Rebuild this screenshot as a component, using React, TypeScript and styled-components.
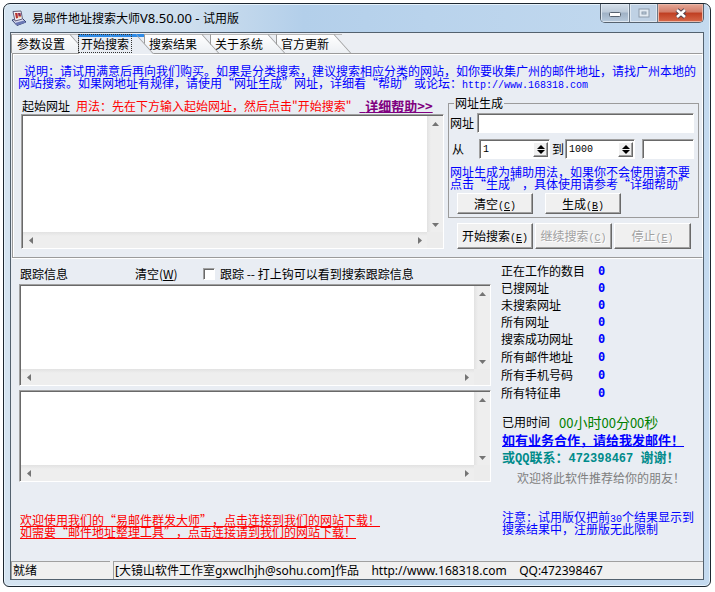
import React from "react";
import styled, { createGlobalStyle, css } from "styled-components";

const cjk = `"Noto Sans CJK SC", sans-serif`;
const ui = `"Noto Sans", "Noto Sans CJK SC", sans-serif`;
const mono = `"Liberation Mono", monospace`;

const Global = createGlobalStyle`
  *, *::before, *::after { box-sizing: border-box; }
  body { margin: 0; background: #fff; }
  #root { padding: 3px 4px 4px 3px; }
  button, input, textarea { font: inherit; color: inherit; margin: 0; padding: 0; border-radius: 0; }
  p, ul, dl, dd { margin: 0; padding: 0; }
`;

const Window = styled.div`
  border: 1px solid #1d2730;
  border-radius: 7px 7px 6px 6px;
  padding: 0 6px 6px;
  background: linear-gradient(90deg, #d5e4f1 0, #cfdfee 180px, #b3cfea 300px, #b9d3ec 60%, #c4daef 100%);
  box-shadow: inset 0 0 0 1px #e6f2fb;
  font: 12px/12px ${cjk};
  color: #000;
  text-spacing-trim: space-all;
`;

const TitleBar = styled.header`
  display: flex;
  align-items: flex-start;
  height: 28px;
  padding-left: 1px;
`;

const Title = styled.h1`
  flex: 1;
  margin: 5px 0 0 5px;
  font: 12px/18px ${ui};
  white-space: pre;
  span { font-size: 13px; }
`;

const Controls = styled.div`
  display: flex;
  height: 19px;
  border: 1px solid #56626f;
  border-top: 0;
  border-radius: 0 0 5px 5px;
  overflow: hidden;
`;

const Control = styled.button<{ $kind?: "close" | "dim" }>`
  width: 28px;
  border: 0;
  border-left: 1px solid #6d7a88;
  display: flex;
  align-items: center;
  justify-content: center;
  background: linear-gradient(#d6e0ea, #bccad9 45%, #9fb1c5 50%, #b8cadc);
  box-shadow: inset 0 0 0 1px #dfe8f1;
  &:first-child { border-left: 0; }
  ${(p) => p.$kind === "dim" && css`background: #bfd1e4;`}
  ${(p) =>
    p.$kind === "close" &&
    css`
      width: 46px;
      background: linear-gradient(#e6a897, #d27c68 45%, #bf3e22 50%, #d7694a);
      box-shadow: inset 0 0 0 1px #eab8a9;
    `}
`;

const Client = styled.main`
  border: 1px solid #53616e;
  background: #e9edf3;
`;

const Tabs = styled.nav`
  display: flex;
  height: 20px;
  padding-top: 1px;
  background: #ebeef3;
`;

const Tab = styled.button<{ $active?: boolean; $level: number }>`
  position: relative;
  z-index: ${(p) => p.$level};
  width: 66px;
  height: 19px;
  border: 0;
  border-left: 1px solid #9b9b9b;
  border-top: 1px solid #b8b8b8;
  padding-left: 4px;
  text-align: left;
  white-space: nowrap;
  background: linear-gradient(#fff, #eceff3) no-repeat 0 0 / 50px 100%;
  clip-path: inset(0 -20px 0 0);
  span { position: relative; z-index: 1; }
  &::after {
    content: "";
    position: absolute;
    left: 30px;
    right: 8px;
    top: -1px;
    bottom: 0;
    border-top: 1px solid #b8b8b8;
    border-right: 1px solid #9b9b9b;
    background: linear-gradient(#fff, #eceff3);
    transform: skewX(42deg);
    transform-origin: top right;
  }
  &:first-child { width: 67px; padding-left: 5px; }
  ${(p) =>
    p.$active &&
    css`
      height: 20px;
      padding: 0 0 4px;
      border-top: 3px solid #2f8be6;
      background: #e9edf3;
      &::after { top: -3px; border-top: 3px solid #2f8be6; background: #e9edf3; }
      span { outline: 1px dotted #333; padding: 0 2px; }
    `}
`;

const SearchPanel = styled.section`
  margin-left: 1px;
  border: 1px solid #9b9b9b;
  border-right-color: #fff;
  box-shadow: inset 1px 1px 0 #fff, 0 1px 0 #fff;
  padding: 11px 3px 8px 8px;
`;

const Intro = styled.p`
  color: #00f;
  margin-left: -3px;
  margin-bottom: 8px;
  white-space: pre;
`;

const Half = styled.span`
  font-family: ${mono};
  font-size: 10px;
  line-height: 0;
`;

const Split = styled.div<{ $gap: number; $side: number }>`
  display: grid;
  grid-template-columns: minmax(0, 1fr) ${(p) => p.$side}px;
  column-gap: ${(p) => p.$gap}px;
  align-items: start;
`;

const StartRow = styled.div`
  display: flex;
  height: 12px;
  margin: 3px 0 2px 1px;
  white-space: pre;
`;

const Usage = styled.span`
  color: #f00;
  margin: 0 8px 0 6px;
`;

const HelpLink = styled.a`
  color: #800080;
  font-size: 13px;
  font-weight: 700;
  text-decoration: underline;
`;

const sunken = css`
  border: 1px solid;
  border-color: #a0a0a0 #fff #fff #a0a0a0;
  box-shadow: inset 1px 1px 0 #696969;
`;

const ScrollFrame = styled.div<{ $height: number; $top?: number }>`
  ${sunken}
  display: grid;
  grid-template: minmax(0, 1fr) 16px / minmax(0, 1fr) 16px;
  height: ${(p) => p.$height}px;
  margin-top: ${(p) => p.$top ?? 0}px;
  padding: 1px 0 0 1px;
  background: #ececec;
`;

const Area = styled.textarea`
  display: block;
  width: 100%;
  height: 100%;
  border: 0;
  outline: 0;
  resize: none;
  background: #fff;
  overflow: hidden;
`;

const Bar = styled.div<{ $vertical?: boolean }>`
  display: flex;
  flex-direction: ${(p) => (p.$vertical ? "column" : "row")};
  justify-content: space-between;
  background: linear-gradient(${(p) => (p.$vertical ? "90deg" : "180deg")}, #e2e2e2, #eee 4px);
`;

const ArrowButton = styled.button`
  width: 16px;
  height: 16px;
  border: 0;
  background: none;
  display: flex;
  align-items: center;
  justify-content: center;
`;

const arrowPaths = {
  up: "M1 6 L4.500 2 L8 6Z",
  down: "M1 3 L4.500 7 L8 3Z",
  left: "M6 1 L2 4.500 L6 8Z",
  right: "M3 1 L7 4.500 L3 8Z",
};

function Arrow({ dir }: { dir: keyof typeof arrowPaths }) {
  return (
    <ArrowButton type="button" aria-label={dir}>
      <svg width="9" height="9" viewBox="0 0 9 9">
        <path d={arrowPaths[dir]} fill="#747474" />
      </svg>
    </ArrowButton>
  );
}

function ScrollBox({ label, height, top }: { label: string; height: number; top?: number }) {
  return (
    <ScrollFrame $height={height} $top={top}>
      <Area aria-label={label} />
      <Bar $vertical>
        <Arrow dir="up" />
        <Arrow dir="down" />
      </Bar>
      <Bar>
        <Arrow dir="left" />
        <Arrow dir="right" />
      </Bar>
    </ScrollFrame>
  );
}

const Group = styled.fieldset`
  margin: 0;
  min-width: 0;
  border: 1px solid #9b9b9b;
  padding: 4px 4px 3px 1px;
`;

const Legend = styled.legend`
  margin-left: 4px;
  padding: 0 1px;
`;

const Field = styled.input`
  ${sunken}
  flex: 1;
  width: 100%;
  min-width: 0;
  height: 20px;
  padding: 0 4px;
  outline: 0;
  background: #fff;
`;

const UrlRow = styled.div`
  display: flex;
  align-items: center;
  gap: 3px;
  margin-bottom: 6px;
`;

const RangeRow = styled.div`
  display: grid;
  grid-template-columns: 29px 71px 15px 70px minmax(0, 1fr);
  align-items: center;
  label { padding-left: 2px; }
`;

const Suffix = styled.div`
  padding-left: 7px;
  display: flex;
`;

const SpinFrame = styled.div`
  ${sunken}
  display: flex;
  height: 20px;
  padding: 2px 1px 1px 3px;
  background: #fff;
  input {
    flex: 1;
    min-width: 0;
    border: 0;
    outline: 0;
    background: none;
    font: 10px/12px ${mono};
  }
`;

const raised = css`
  border: 1px solid;
  border-color: #fff #696969 #696969 #fff;
  box-shadow: inset -1px -1px 0 #a0a0a0;
  background: #f0f0f0;
`;

const SpinButtons = styled.div`
  ${raised}
  display: flex;
  flex-direction: column;
  width: 15px;
  button {
    flex: 1;
    border: 0;
    background: none;
    display: flex;
    align-items: center;
    justify-content: center;
  }
`;

function Spin({ id, value }: { id: string; value: string }) {
  return (
    <SpinFrame>
      <input id={id} defaultValue={value} />
      <SpinButtons>
        <button type="button" aria-label="增加">
          <svg width="8" height="5" viewBox="0 0 8 5"><path d="M0 5 L4 1 L8 5Z" /></svg>
        </button>
        <button type="button" aria-label="减少">
          <svg width="8" height="5" viewBox="0 0 8 5"><path d="M0 0 L4 4 L8 0Z" /></svg>
        </button>
      </SpinButtons>
    </SpinFrame>
  );
}

const Hint = styled.p`
  color: #00f;
  margin: 7px 0 3px;
  white-space: pre;
`;

const Push = styled.button<{ $tall?: boolean }>`
  ${raised}
  height: ${(p) => (p.$tall ? 26 : 21)}px;
  width: 76px;
  white-space: nowrap;
  &:disabled {
    color: #a0a0a0;
    text-shadow: 1px 1px 0 #fff;
  }
`;

const GroupActions = styled.div`
  display: flex;
  gap: 12px;
  padding-left: 7px;
`;

const RunActions = styled.div`
  display: grid;
  grid-template-columns: 76px 77px 77px;
  gap: 2px;
  padding: 5px 0 0 9px;
  button { width: 100%; }
`;

function Caption({ text, hotkey }: { text: string; hotkey: string }) {
  return (
    <>
      {text}
      <Half>(<u>{hotkey}</u>)</Half>
    </>
  );
}

const TracePanel = styled.section`
  padding: 4px 2px 23px 8px;
`;

const TraceRow = styled.div`
  display: grid;
  grid-template-columns: 115px 68px auto;
  align-items: center;
  height: 12px;
  margin: 6px 0 4px 1px;
  label {
    display: flex;
    align-items: center;
    gap: 5px;
    white-space: pre;
  }
`;

const PlainButton = styled.button`
  border: 0;
  background: none;
  text-align: left;
`;

const Check = styled.input`
  ${sunken}
  appearance: none;
  width: 12px;
  height: 12px;
  background: #fff;
`;

const Promo = styled.a`
  display: block;
  width: max-content;
  color: #f00;
  text-decoration: underline;
  text-underline-offset: 1px;
`;

const Promos = styled.div`
  margin: 32px 0 0 1px;
`;

const Stats = styled.dl`
  display: grid;
  grid-template-columns: 97px 1fr;
  grid-template-rows: repeat(4, 17px) repeat(4, 18px);
  align-items: center;
  dd {
    color: #00f;
    font: 700 12px/12px "DejaVu Sans Mono", monospace;
  }
`;

const Elapsed = styled.p`
  display: flex;
  gap: 9px;
  margin: 12px 0 1px 1px;
  line-height: 16px;
`;

const Clock = styled.output`
  color: #008000;
  font-size: 14px;
  span { font-size: 13px; }
`;

const MailLink = styled.a`
  display: block;
  width: max-content;
  margin-left: 1px;
  color: #00f;
  font-size: 13px;
  font-weight: 700;
  line-height: 16px;
`;

const Contact = styled.p`
  margin: 1px 0 6px 1px;
  color: #008b8b;
  font-size: 13px;
  font-weight: 700;
  line-height: 16px;
  white-space: pre;
  span { font: 700 12px/12px ${mono}; }
`;

const Recommend = styled.p`
  margin-left: 16px;
  color: #808080;
  line-height: 14px;
`;

const Notice = styled.p`
  margin: 26px 0 0 1px;
  color: #00f;
`;

const StatusBar = styled.footer`
  display: flex;
  gap: 3px;
  background: #f0f0f0;
  font: 12px/18px ${ui};
`;

const StatusCell = styled.div<{ $width?: number }>`
  flex: ${(p) => (p.$width ? `0 0 ${p.$width}px` : "1")};
  height: 18px;
  padding-left: 1px;
  border-top: 1px solid #a0a0a0;
  border-left: 1px solid #a0a0a0;
  white-space: pre;
`;

const tabs = ["参数设置", "开始搜索", "搜索结果", "关于系统", "官方更新"];
const stats = [
  "正在工作的数目",
  "已搜网址",
  "未搜索网址",
  "所有网址",
  "搜索成功网址",
  "所有邮件地址",
  "所有手机号码",
  "所有特征串",
];

function AppIcon() {
  return (
    <svg width="16" height="16" viewBox="0 0 16 16">
      <path d="M1 10 L11 8 L15 12 L6 15.500Z" fill="#d9dcf0" stroke="#34406e" />
      <path d="M4 13 L13 10.500 L15 12.500 L6 15.500Z" fill="#6a78b4" />
      <path d="M2 1.500 L10 1 L11.500 9 L4 11Z" fill="#f4f0f4" stroke="#62607c" />
      <path d="M4 3 L6.500 3 L7 8 L5 8.500Z" fill="#b8322c" />
      <path d="M7 3 L9.500 3 L10 6 L7.500 6.500Z" fill="#8c2c50" />
      <path d="M7.500 7 L10 6.500" stroke="#e08a3c" />
    </svg>
  );
}

const IconSlot = styled.span`
  margin-top: 6px;
  width: 16px;
  height: 16px;
`;

export default function App() {
  return (
    <>
      <Global />
      <Window lang="zh-CN">
        <TitleBar>
          <IconSlot><AppIcon /></IconSlot>
          <Title>易邮件地址搜索大师<span>V8.50.00 - </span>试用版</Title>
          <Controls>
            <Control type="button" aria-label="最小化">
              <svg width="14" height="8" viewBox="0 0 14 8">
                <rect x="1.500" y="3.500" width="11" height="4" rx="1" fill="#fff" stroke="#566270" />
              </svg>
            </Control>
            <Control type="button" aria-label="最大化" $kind="dim" disabled>
              <svg width="12" height="10" viewBox="0 0 12 10">
                <rect x="1" y="1" width="10" height="8" fill="#e3ebf3" stroke="#8e9cab" />
                <rect x="4" y="4" width="4" height="2" fill="#bfd1e4" stroke="#8e9cab" />
              </svg>
            </Control>
            <Control type="button" aria-label="关闭" $kind="close">
              <svg width="14" height="11" viewBox="0 0 14 11">
                <path d="M3 2 L11 9 M11 2 L3 9" stroke="#55404a" strokeWidth="4.500" />
                <path d="M3 2 L11 9 M11 2 L3 9" stroke="#fff" strokeWidth="2.600" />
              </svg>
            </Control>
          </Controls>
        </TitleBar>
        <Client>
          <Tabs>
            {tabs.map((t, i) => (
              <Tab key={t} type="button" $active={i === 1} $level={i === 1 ? 9 : tabs.length - i}>
                <span>{t}</span>
              </Tab>
            ))}
          </Tabs>
          <SearchPanel>
            <Intro>
              <Half> </Half>说明：请试用满意后再向我们购买。如果是分类搜索，建议搜索相应分类的网站，如你要收集广州的邮件地址，请找广州本地的
              <br />
              网站搜索。如果网地址有规律，请使用“网址生成”网址，详细看“帮助”或论坛：<Half>http://www.168318.com</Half>
            </Intro>
            <Split $gap={4} $side={251}>
              <div>
                <StartRow>
                  <span>起始网址</span>
                  <Usage>用法：先在下方输入起始网址，然后点击"开始搜索"</Usage>
                  <HelpLink href="#help">{"\u00a0\u00a0"}详细帮助&gt;&gt;</HelpLink>
                </StartRow>
                <ScrollBox label="起始网址" height={135} />
              </div>
              <div>
                <Group>
                  <Legend>网址生成</Legend>
                  <UrlRow>
                    <label htmlFor="url">网址</label>
                    <Field id="url" />
                  </UrlRow>
                  <RangeRow>
                    <label htmlFor="from">从</label>
                    <Spin id="from" value="1" />
                    <label htmlFor="to">到</label>
                    <Spin id="to" value="1000" />
                    <Suffix><Field aria-label="后缀" /></Suffix>
                  </RangeRow>
                  <Hint>
                    网址生成为辅助用法，如果你不会使用请不要
                    <br />
                    点击“生成”，具体使用请参考“详细帮助”
                  </Hint>
                  <GroupActions>
                    <Push type="button"><Caption text="清空" hotkey="C" /></Push>
                    <Push type="button"><Caption text="生成" hotkey="B" /></Push>
                  </GroupActions>
                </Group>
                <RunActions>
                  <Push type="button" $tall><Caption text="开始搜索" hotkey="E" /></Push>
                  <Push type="button" $tall disabled><Caption text="继续搜索" hotkey="C" /></Push>
                  <Push type="button" $tall disabled><Caption text="停止" hotkey="E" /></Push>
                </RunActions>
              </div>
            </Split>
          </SearchPanel>
          <TracePanel>
            <Split $gap={10} $side={200}>
              <div>
                <TraceRow>
                  <span>跟踪信息</span>
                  <PlainButton type="button">清空(<u>W</u>)</PlainButton>
                  <label><Check type="checkbox" />跟踪 -- 打上钩可以看到搜索跟踪信息</label>
                </TraceRow>
                <ScrollBox label="跟踪信息" height={102} />
                <ScrollBox label="跟踪结果" height={92} top={4} />
                <Promos>
                  <Promo href="#sender">欢迎使用我们的“易邮件群发大师”，点击连接到我们的网站下载！</Promo>
                  <Promo href="#tidy">如需要“邮件地址整理工具”，点击连接请到我们的网站下载！</Promo>
                </Promos>
              </div>
              <div>
                <Stats>
                  {stats.map((s) => (
                    <React.Fragment key={s}>
                      <dt>{s}</dt>
                      <dd>0</dd>
                    </React.Fragment>
                  ))}
                </Stats>
                <Elapsed>
                  已用时间
                  <Clock><span>00</span>小时<span>00</span>分<span>00</span>秒</Clock>
                </Elapsed>
                <MailLink href="#mail">如有业务合作，请给我发邮件！</MailLink>
                <Contact>或<span>QQ</span>联系：<span>472398467 </span>谢谢！</Contact>
                <Recommend>欢迎将此软件推荐给你的朋友！</Recommend>
                <Notice>
                  注意：试用版仅把前<Half>30</Half>个结果显示到
                  <br />
                  搜索结果中，注册版无此限制
                </Notice>
              </div>
            </Split>
          </TracePanel>
          <StatusBar>
            <StatusCell $width={99}>就绪</StatusCell>
            <StatusCell>[大镜山软件工作室gxwclhjh@sohu.com]作品    http://www.168318.com    QQ:472398467</StatusCell>
          </StatusBar>
        </Client>
      </Window>
    </>
  );
}
